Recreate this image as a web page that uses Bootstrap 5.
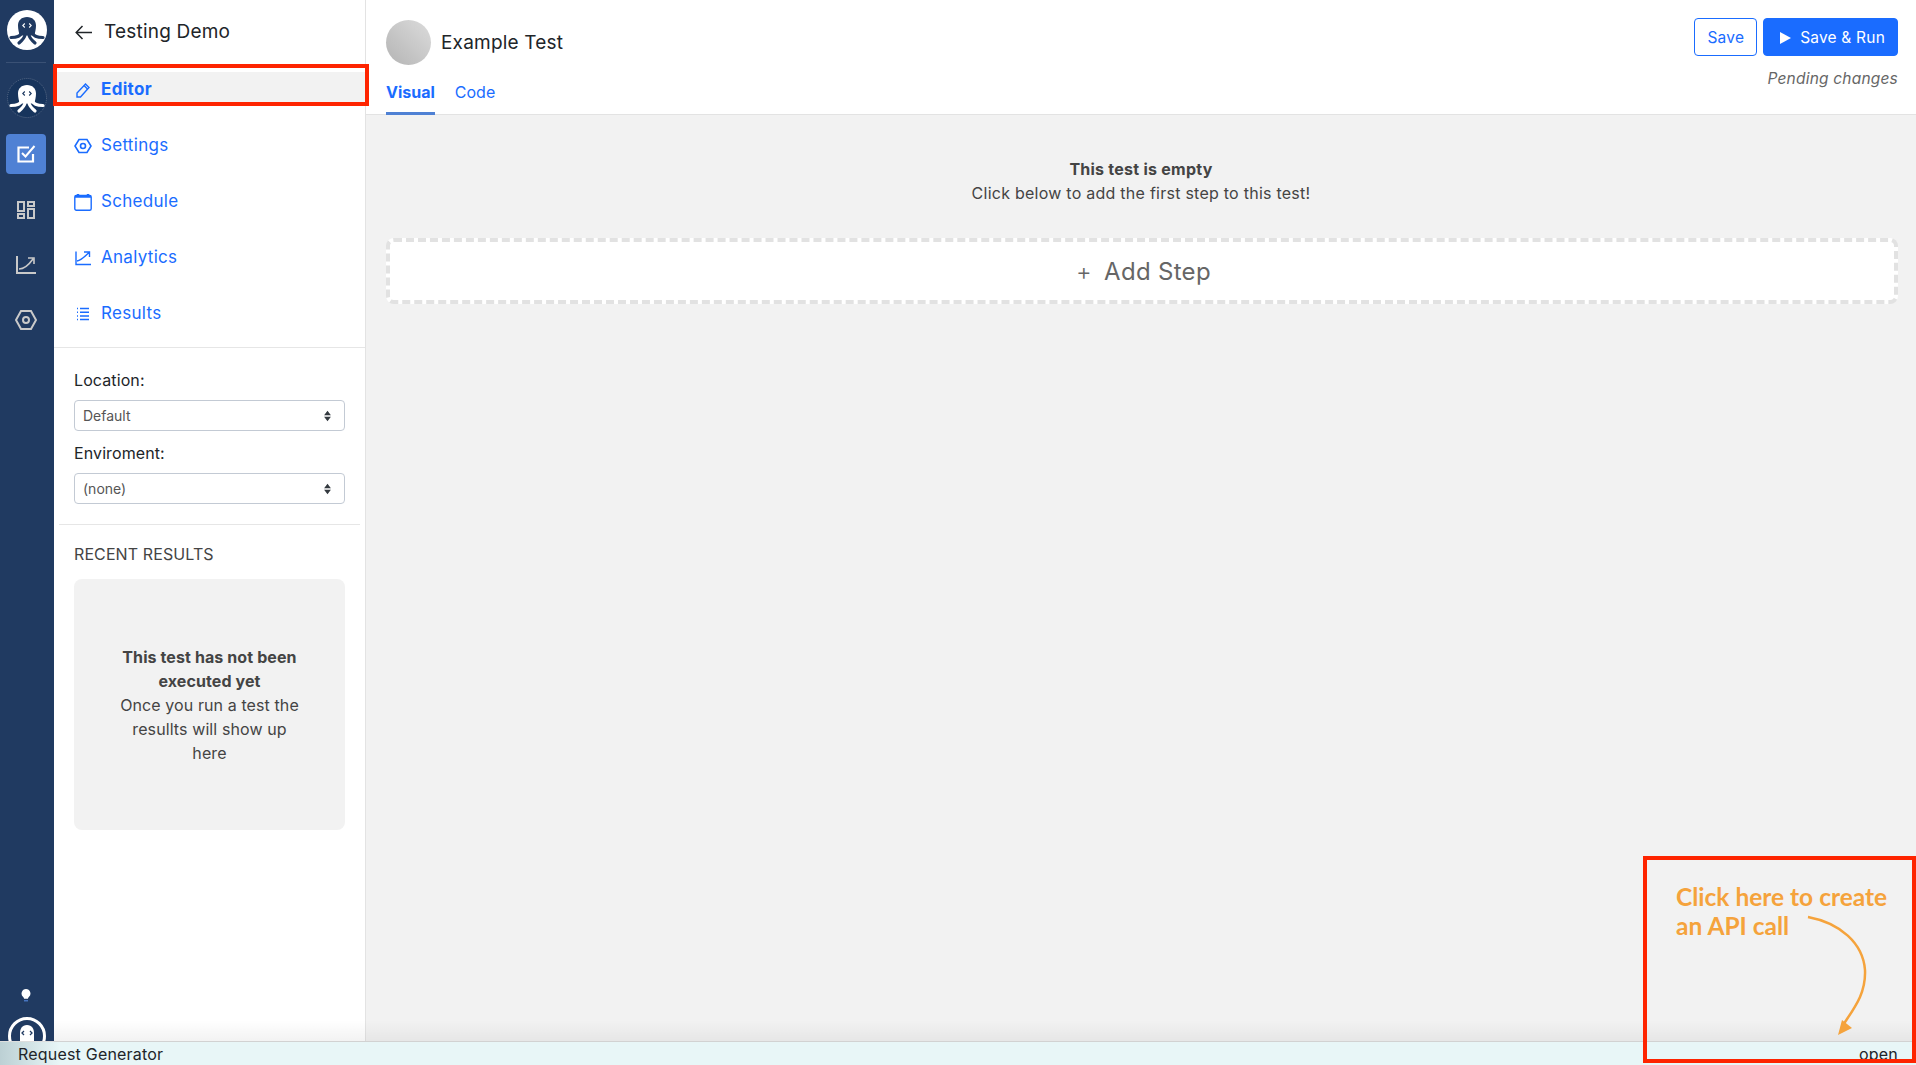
<!DOCTYPE html>
<html lang="en">
<head>
  <meta charset="UTF-8">
  <meta name="viewport" content="width=device-width, initial-scale=1.0">
  <title>Testing Demo</title>
  <link rel="stylesheet" href="https://cdn.jsdelivr.net/npm/bootstrap@5.3.0/dist/css/bootstrap.min.css">
  <style>
    body {
      font-family: Inter, "Liberation Sans", sans-serif;
      font-size: 16px;
      color: #212529;
      height: 100vh;
      overflow: hidden;
    }
    .app-shell { height: 100vh; }
    .app-body { min-height: 0; }

    /* dark icon rail */
    .rail {
      width: 54px;
      flex: none;
      background: #203a61;
      overflow: hidden;
      padding-top: 10px;
    }
    .rail-rule { width: 40px; height: 1px; background: #3a5175; margin: 12px 0 15px 6px; }
    .rail-tile { width: 40px; height: 40px; margin-left: 6px; border-radius: 4px; margin-top: 15px; }
    .rail-tile.is-active { background: #4f81d4; margin-top: 16px; margin-bottom: 16px; }
    .rail-tile.is-active + .rail-tile { margin-top: 0; }
    .rail-logo { margin-left: 7px; display: block; flex: none; }
    .rail-bulb { margin-left: 21px; display: block; margin-bottom: 15px; flex: none; }
    .rail-avatar { margin-left: 8px; display: block; margin-bottom: -16px; flex: none; }

    /* test sidebar */
    .side-panel {
      width: 312px;
      flex: none;
      background: #fff;
      border-right: 1px solid #e3e3e3;
    }
    .side-title { height: 65px; padding: 0 0 1px 21px; gap: 12px; font-size: 19px; letter-spacing: .2px; }
    .side-link {
      display: flex;
      align-items: center;
      height: 31px;
      margin: 7px 0 18px;
      padding: 4px 0 0 20px;
      gap: 9px;
      color: #1a6cff;
      font-size: 17px;
      letter-spacing: .3px;
    }
    .side-link:hover { color: #1a6cff; }
    .side-link.is-current { background: #f2f2f2; font-weight: 700; }
    .side-link svg { flex: none; width: 18px; }
    .side-nav { height: 283px; border-bottom: 1px solid #e6e6e6; }
    .side-form { padding: 20px 20px 20px; }
    .side-label { margin-bottom: 8px; line-height: 24px; display: block; letter-spacing: .1px; }
    .side-select {
      height: 31px;
      font-size: 14px;
      padding: 0 24px 0 8px;
      color: #555;
      border-color: #c3cad4;
      border-radius: 4px;
      margin-bottom: 10px;
      background-image: url("data:image/svg+xml,%3csvg xmlns='http://www.w3.org/2000/svg' viewBox='0 0 10 14'%3e%3cpath fill='%23343a40' d='M5 1 9 6H1zM5 13 1 8h8z'/%3e%3c/svg%3e");
      background-size: 9px 12px;
      background-position: right 12px center;
    }
    .side-select:last-child { margin-bottom: 0; }
    .side-rule { margin: 0 5px; border-top: 1px solid #e6e6e6; }
    .recent-head { margin: 17px 20px 13px; line-height: 24px; color: #444; letter-spacing: .1px; }
    .recent-empty {
      margin: 0 20px;
      height: 251px;
      background: #f2f2f2;
      border-radius: 8px;
      padding: 0 42px;
      line-height: 24px;
      color: #444;
      letter-spacing: .1px;
    }

    /* main area */
    .main-area { background: #f2f2f2; min-width: 0; }
    .main-head { height: 115px; background: #fff; border-bottom: 1px solid #e3e3e3; padding: 20px 18px 0 20px; }
    .title-row { gap: 10px; }
    .test-avatar { width: 45px; height: 45px; border-radius: 50%; background: linear-gradient(45deg, #b4b4b4, #dcdcdc); }
    .test-name { font-size: 19px; letter-spacing: .2px; padding-top: 2px; }
    .view-tabs { gap: 20px; margin-top: 16px; }
    .view-tab { padding: 0; height: 34px; color: #1a6cff; line-height: 22px; }
    .view-tab:hover { color: #1a6cff; }
    .view-tab.is-current { font-weight: 700; border-bottom: 3px solid #4f81d4; }
    .head-actions { gap: 6px; margin-top: -2px; }
    .head-btn { height: 38px; font-size: 15.5px; border-radius: 4px; padding: 1px 12px 0; letter-spacing: .2px; display: inline-flex; align-items: center; }
    .btn-save { color: #1a6cff; border-color: #1a6cff; }
    .btn-run { background: #1a6cff; border-color: #1a6cff; gap: 9px; padding-left: 15px; }
    .pending { color: #666; font-size: 15.5px; font-style: italic; line-height: 22px; margin-top: 12px; letter-spacing: .2px; }
    .empty-msg { padding-top: 42px; line-height: 24px; color: #444; letter-spacing: .25px; }
    .add-step {
      margin: 33px 18px 0 20px;
      height: 66px;
      padding: 1px 0 0 3px;
      background: #fff;
      border: 4px dashed #e2e2e2;
      border-radius: 8px;
      color: #666;
      font-size: 24px;
      gap: 12px;
      letter-spacing: .3px;
    }
    .add-step span:first-child { font-weight: 300; }

    /* request generator bar */
    .req-bar {
      height: 24px;
      flex: none;
      position: relative;
      background: linear-gradient(90deg, #bcd0d4 0, #e8f6f7 60px);
      border-top: 1px solid #ddd;
      padding: 0 18px;
      line-height: 25px;
      letter-spacing: .2px;
    }
    .req-bar::before {
      content: "";
      position: absolute;
      left: 54px;
      right: 0;
      bottom: 100%;
      height: 22px;
      background: linear-gradient(rgba(0,0,0,0), rgba(0,0,0,.05));
      pointer-events: none;
    }

    /* tutorial annotations drawn on top of the screenshot */
    .mark-box { position: absolute; border: 4px solid #fe2400; pointer-events: none; }
    .mark-editor { left: 53px; top: 64px; width: 316px; height: 42px; }
    .mark-api { left: 1643px; top: 856px; width: 273px; height: 207px; }
    .mark-note {
      position: absolute;
      left: 29px;
      top: 22px;
      font-family: Lato, "Liberation Sans", sans-serif;
      font-weight: 700;
      font-size: 24.5px;
      line-height: 29px;
      color: #f5a33c;
      white-space: nowrap;
    }
    .mark-arrow { position: absolute; left: 158px; top: 55px; }
  </style>
</head>
<body>
<svg width="0" height="0" class="position-absolute">
  <defs>
    <g id="octo-body">
      <path d="M20 7c-5.500 0-9 3.500-9 8.500 0 4 1 6.500 1.500 10h15c.5-3.500 1.500-6 1.500-10C29 10.500 25.500 7 20 7z"/>
      <path fill="none" stroke-width="3.200" stroke="currentColor" stroke-linecap="round" d="M14.500 23c-1 3-5 4.500-10.500 4.500M25.500 23c1 3 5 4.500 10.500 4.500M18 25c-.5 3-2.500 5-6 8M22 25c.5 3 2.500 5 6 8"/>
    </g>
  </defs>
</svg>
<div class="app-shell d-flex flex-column position-relative">
  <div class="app-body d-flex flex-grow-1">

    <div class="rail d-flex flex-column">
      <svg class="rail-logo" width="40" height="40" viewBox="0 0 40 40">
        <circle cx="20" cy="20" r="20" fill="#fff"/>
        <use href="#octo-body" fill="#203a61" color="#203a61"/>
        <path fill="none" stroke="#fff" stroke-width="1.100" d="M17.800 13.500 15.800 15.500l2 2M22.200 13.500l2 2-2 2"/>
      </svg>
      <div class="rail-rule"></div>
      <svg class="rail-logo" width="40" height="40" viewBox="0 0 40 40">
        <circle cx="20" cy="20" r="19.500" fill="#17345c" stroke="#5a6c88" stroke-dasharray="1 1"/>
        <use href="#octo-body" fill="#fff" color="#fff"/>
        <path fill="none" stroke="#17345c" stroke-width="1.100" d="M17.800 13.500 15.800 15.500l2 2M22.200 13.500l2 2-2 2"/>
      </svg>
      <div class="rail-tile is-active d-flex align-items-center justify-content-center">
        <svg width="20" height="20" viewBox="0 0 20 20" fill="none" stroke="#fff">
          <path stroke-width="2.200" d="M17 10v7.500H2.500v-14H13"/>
          <path stroke-width="2" d="m6 9 3.500 3.500L18.500 2"/>
        </svg>
      </div>
      <div class="rail-tile d-flex align-items-center justify-content-center">
        <svg width="18" height="18" viewBox="0 0 18 18" fill="none" stroke="#c9c9c9" stroke-width="2">
          <rect x="1" y="1" width="6" height="9"/><rect x="11" y="1" width="6" height="4"/>
          <rect x="1" y="13" width="6" height="4"/><rect x="11" y="8" width="6" height="9"/>
        </svg>
      </div>
      <div class="rail-tile d-flex align-items-center justify-content-center">
        <svg width="20" height="18" viewBox="0 0 20 18" fill="none" stroke="#c9c9c9" stroke-width="2">
          <path d="M1 0v17h19"/><path stroke-width="1.600" d="M3 13c5 0 9-3 14-10M12 2h6v6"/>
        </svg>
      </div>
      <div class="rail-tile d-flex align-items-center justify-content-center">
        <svg width="22" height="20" viewBox="0 0 22 20" fill="none" stroke="#c9c9c9" stroke-width="2">
          <path d="M6 1h10l5 9-5 9H6l-5-9z"/><circle cx="11" cy="10" r="3"/>
        </svg>
      </div>
      <svg class="rail-bulb mt-auto" width="10" height="13" viewBox="0 0 12 16">
        <path fill="#fff" d="M6 0a5.500 5.500 0 0 0-3.500 9.700c.6.600 1 1.300 1.100 2.300h4.800c.1-1 .5-1.700 1.100-2.300A5.500 5.500 0 0 0 6 0z"/>
        <path stroke="#4f81d4" stroke-width="1.500" d="M3.500 14.500h5"/>
      </svg>
      <svg class="rail-avatar" width="38" height="40" viewBox="0 0 38 40">
        <circle cx="19" cy="19" r="17.500" fill="#203a61" stroke="#fff" stroke-width="3"/>
        <path fill="#fff" d="M19 8c-5 0-7 4-7 8v14h14V16c0-4-2-8-7-8z"/>
        <path fill="none" stroke="#203a61" stroke-width="1.300" d="m16 14-2 2 2 2M22 14l2 2-2 2"/>
      </svg>
    </div>

    <div class="side-panel">
      <div class="side-title d-flex align-items-center">
        <svg width="17" height="15" viewBox="0 0 17 15" fill="none" stroke="#212529" stroke-width="1.500"><path d="M17 7.500H2M7.500 1 1.200 7.500 7.500 14"/></svg>
        <span>Testing Demo</span>
      </div>
      <nav class="side-nav nav flex-column flex-nowrap">
        <a class="side-link is-current text-decoration-none" href="#">
          <svg height="16" viewBox="0 0 18 16" fill="none" stroke="#1a6cff" stroke-width="1.400"><path d="M3 15v-4L11.500 2 15 5.500 6.500 15z"/><path d="m10 3.500 3.500 3.500"/></svg>
          <span>Editor</span>
        </a>
        <a class="side-link text-decoration-none" href="#">
          <svg height="16" viewBox="0 0 18 16" fill="none" stroke="#1a6cff" stroke-width="1.600"><path d="M5 1.500h8l4 6.500-4 6.500H5L1 8z"/><circle cx="9" cy="8" r="2.500"/></svg>
          <span>Settings</span>
        </a>
        <a class="side-link text-decoration-none" href="#">
          <svg height="18" viewBox="0 0 18 18" fill="none" stroke="#1a6cff" stroke-width="1.400"><rect x=".8" y="2.500" width="16.400" height="14.700" rx="1.500"/><path stroke-width="2.400" d="M1 3.500h16M4 1v2M14 1v2"/></svg>
          <span>Schedule</span>
        </a>
        <a class="side-link text-decoration-none" href="#">
          <svg height="16" viewBox="0 0 18 16" fill="none" stroke="#1a6cff" stroke-width="1.400"><path d="M2 1.500v13h15"/><path d="M3 11c4-.5 7-3.500 12-8.500M10 2h5.500v5"/></svg>
          <span>Analytics</span>
        </a>
        <a class="side-link text-decoration-none" href="#">
          <svg height="14" viewBox="0 0 18 14" fill="none" stroke="#1a6cff" stroke-width="1.500"><path d="M3 1.500h1M6 1.500h9M3 5.200h1M6 5.200h9M3 8.900h1M6 8.900h9M3 12.600h1M6 12.600h9"/></svg>
          <span>Results</span>
        </a>
      </nav>
      <div class="side-form">
        <label class="side-label" for="loc">Location:</label>
        <select id="loc" class="form-select side-select"><option>Default</option></select>
        <label class="side-label" for="env">Enviroment:</label>
        <select id="env" class="form-select side-select"><option>(none)</option></select>
      </div>
      <div class="side-rule"></div>
      <div class="recent-head">RECENT RESULTS</div>
      <div class="recent-empty d-flex flex-column justify-content-center text-center">
        <div class="fw-bold">This test has not been executed yet</div>
        <div>Once you run a test the resullts will show up here</div>
      </div>
    </div>

    <div class="main-area flex-grow-1">
      <div class="main-head d-flex justify-content-between">
        <div>
          <div class="title-row d-flex align-items-center">
            <div class="test-avatar"></div>
            <span class="test-name">Example Test</span>
          </div>
          <div class="view-tabs d-flex">
            <a class="view-tab is-current text-decoration-none" href="#">Visual</a>
            <a class="view-tab text-decoration-none" href="#">Code</a>
          </div>
        </div>
        <div class="text-end">
          <div class="head-actions d-flex justify-content-end">
            <button class="btn btn-save head-btn" type="button">Save</button>
            <button class="btn btn-primary btn-run head-btn" type="button">
              <svg width="12" height="12" viewBox="0 0 12 12"><path fill="#fff" d="M1 0v12l11-6z"/></svg>
              Save &amp; Run
            </button>
          </div>
          <div class="pending">Pending changes</div>
        </div>
      </div>
      <div class="empty-msg text-center">
        <div class="fw-bold">This test is empty</div>
        <div>Click below to add the first step to this test!</div>
      </div>
      <div class="add-step d-flex align-items-center justify-content-center">
        <span>+</span><span>Add Step</span>
      </div>
    </div>
  </div>

  <div class="req-bar d-flex justify-content-between">
    <span>Request Generator</span>
    <span>open</span>
  </div>

  <div class="mark-box mark-editor"></div>
  <div class="mark-box mark-api">
    <div class="mark-note">Click here to create<br>an API call</div>
    <svg class="mark-arrow" width="70" height="125" viewBox="0 0 70 125" fill="none">
      <path stroke="#f5a33c" stroke-width="2.500" d="M3 2C35 8 58 28 60 55 61 78 50 92 38 110"/>
      <path fill="#f5a33c" d="m37 105 10 8-14 7z"/>
    </svg>
  </div>
</div>
<script src="https://cdn.jsdelivr.net/npm/bootstrap@5.3.0/dist/js/bootstrap.bundle.min.js"></script>
</body>
</html>
